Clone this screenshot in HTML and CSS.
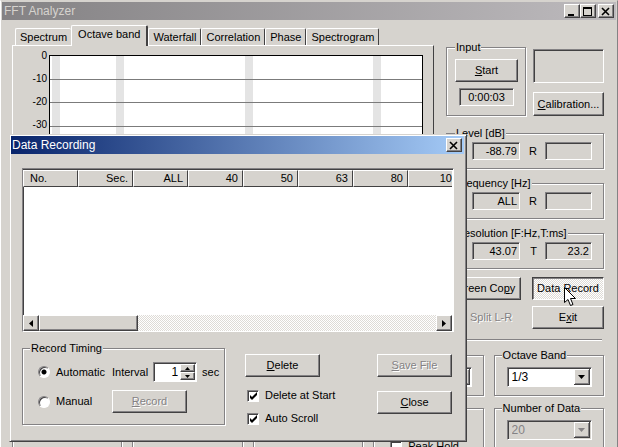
FILE: index.html
```html
<!DOCTYPE html>
<html lang="en">
<head>
    <meta charset="UTF-8">
    <meta name="viewport" content="width=device-width, initial-scale=1.0">
    <title>FFT Analyzer</title>
    <link rel="stylesheet" href="styles.css">
</head>
<body>
    <div class="window">
        <header class="titlebar">
            <h1>FFT Analyzer</h1>
            <div class="window-buttons">
                <button class="btn caption" aria-label="Minimize"><svg width="10" height="9"><path d="M1 7h6v2H1z"/></svg></button>
                <button class="btn caption" aria-label="Maximize"><svg width="10" height="9"><path fill-rule="evenodd" d="M0 0h9v9H0zM1 2v6h7V2z"/></svg></button>
                <button class="btn caption close" aria-label="Close window"><svg width="10" height="9"><path d="M1 1l7 7M8 1l-7 7" stroke="#000" stroke-width="1.6"/></svg></button>
            </div>
        </header>

        <main class="client">
            <div class="main">
                <section class="analyzer">
                    <div class="tabs" role="tablist">
                        <button class="tab" role="tab">Spectrum</button>
                        <button class="tab active" role="tab" aria-selected="true">Octave band</button>
                        <button class="tab" role="tab">Waterfall</button>
                        <button class="tab" role="tab">Correlation</button>
                        <button class="tab" role="tab">Phase</button>
                        <button class="tab" role="tab">Spectrogram</button>
                    </div>
                    <div class="panel">
                        <div class="axis">
                            <span>0</span>
                            <span>-10</span>
                            <span>-20</span>
                            <span>-30</span>
                        </div>
                        <svg class="plot">
                            <rect width="100%" height="100%" fill="#fff"/>
                            <g fill="#e4e4e4">
                                <rect x="2" width="8" height="100%"/>
                                <rect x="66" width="8" height="100%"/>
                                <rect x="195" width="8" height="100%"/>
                                <rect x="323" width="8" height="100%"/>
                            </g>
                            <g fill="#7b7b7b">
                                <rect y="23" width="100%" height="1"/>
                                <rect y="46" width="100%" height="1"/>
                                <rect y="70" width="100%" height="1"/>
                            </g>
                        </svg>
                    </div>
                </section>

                <aside class="side">
                    <div class="input-row">
                        <fieldset class="group input-group">
                            <legend>Input</legend>
                            <button class="btn"><u>S</u>tart</button>
                            <output class="field time">0:00:03</output>
                        </fieldset>
                        <div class="input-extra">
                            <div class="field display"></div>
                            <button class="btn"><u>C</u>alibration...</button>
                        </div>
                    </div>
                    <fieldset class="group readout">
                        <legend>Level [dB]</legend>
                        <output class="field">-88.79</output>
                        <span>R</span><output class="field"></output>
                    </fieldset>
                    <fieldset class="group readout">
                        <legend>Frequency [Hz]</legend>
                        <output class="field">ALL</output>
                        <span>R</span><output class="field"></output>
                    </fieldset>
                    <fieldset class="group readout">
                        <legend>Resolution [F:Hz,T:ms]</legend>
                        <output class="field">43.07</output>
                        <span>T</span><output class="field">23.2</output>
                    </fieldset>
                    <div class="actions">
                        <button class="btn">Screen Co<u>p</u>y</button>
                        <button class="btn pressed">Data Record
                            <svg class="cursor" width="12" height="20"><path d="M.5.5v15l3.5-3 2.5 6 2.500-1-2.500-6h5z" fill="#fff" stroke="#000"/></svg>
                        </button>
                        <label class="check disabled"><input type="checkbox" disabled>Split L-R</label>
                        <button class="btn">E<u>x</u>it</button>
                    </div>
                </aside>
            </div>

            <hr>

            <div class="options">
                <fieldset class="group plain"></fieldset>
                <fieldset class="group plain"></fieldset>
                <fieldset class="group plain"></fieldset>
                <div class="stack">
                    <fieldset class="group plain">
                        <select aria-label="Window"></select>
                    </fieldset>
                    <fieldset class="group plain">
                        <label class="check peak"><input type="checkbox">Peak Hold</label>
                    </fieldset>
                </div>
                <div class="stack">
                    <fieldset class="group">
                        <legend>Octave Band</legend>
                        <select aria-label="Octave Band"><option>1/3</option></select>
                    </fieldset>
                    <fieldset class="group">
                        <legend>Number of Data</legend>
                        <select aria-label="Number of Data" disabled><option>20</option></select>
                    </fieldset>
                </div>
            </div>
        </main>

        <div class="dialog" role="dialog" aria-labelledby="dialog-title">
            <header class="titlebar">
                <h2 id="dialog-title">Data Recording</h2>
                <div class="window-buttons">
                    <button class="btn caption close" aria-label="Close dialog"><svg width="10" height="9"><path d="M1 1l7 7M8 1l-7 7" stroke="#000" stroke-width="1.6"/></svg></button>
                </div>
            </header>
            <div class="dialog-body">
                <div class="list">
                    <div class="list-view">
                        <table>
                            <thead>
                                <tr>
                                    <th>No.</th>
                                    <th>Sec.</th>
                                    <th>ALL</th>
                                    <th>40</th>
                                    <th>50</th>
                                    <th>63</th>
                                    <th>80</th>
                                    <th>100</th>
                                </tr>
                            </thead>
                            <tbody></tbody>
                        </table>
                    </div>
                    <div class="scrollbar">
                        <button class="btn arrow" aria-label="Scroll left"><svg width="4" height="7"><path d="M4 0v7L0 3.500z"/></svg></button>
                        <div class="thumb"></div>
                        <button class="btn arrow right" aria-label="Scroll right"><svg width="4" height="7"><path d="M0 0v7l4-3.500z"/></svg></button>
                    </div>
                </div>

                <div class="controls">
                    <fieldset class="group timing">
                        <legend>Record Timing</legend>
                        <label class="check"><input type="radio" name="timing" checked>Automatic</label>
                        <div class="interval">
                            <label for="interval">Interval</label>
                            <span class="spin">
                                <input id="interval" type="text" value="1">
                                <span class="spin-buttons">
                                    <button class="btn" aria-label="Increase"><svg width="5" height="3"><path d="M0 3h5L2.500 0z"/></svg></button>
                                    <button class="btn" aria-label="Decrease"><svg width="5" height="3"><path d="M0 0h5L2.500 3z"/></svg></button>
                                </span>
                            </span>
                            <span>sec</span>
                        </div>
                        <label class="check"><input type="radio" name="timing">Manual</label>
                        <button class="btn" disabled><u>R</u>ecord</button>
                    </fieldset>
                    <div class="recording">
                        <button class="btn"><u>D</u>elete</button>
                        <label class="check"><input type="checkbox" checked>Delete at Start</label>
                        <label class="check"><input type="checkbox" checked>Auto Scroll</label>
                    </div>
                    <div class="finish">
                        <button class="btn" disabled><u>S</u>ave File</button>
                        <button class="btn"><u>C</u>lose</button>
                    </div>
                </div>
            </div>
        </div>
    </div>
</body>
</html>
```
FILE: styles.css
```css
:root {
    --face: #d6d3ce;
    --light: #ffffff;
    --shadow: #848284;
    --dark: #424142;
    --dither: repeating-conic-gradient(#ffffff 0% 25%, #dedbd6 0% 50%);
}

* {
    box-sizing: border-box;
    margin: 0;
    padding: 0;
}

body {
    font-family: "Liberation Sans", Arial, sans-serif;
    font-size: 11px;
    line-height: 13px;
    color: #000;
    background: var(--face);
    overflow: hidden;
}

button, input, select {
    font: inherit;
    color: inherit;
}

h1, h2 {
    font-size: 12px;
    font-weight: normal;
}

/* windows */

.window {
    position: relative;
    height: 100vh;
    overflow: hidden;
    padding: 1px;
    border: solid;
    border-width: 1px 1px 0;
    border-color: var(--face) var(--shadow) var(--face) var(--light);
}

.titlebar {
    display: flex;
    align-items: center;
    justify-content: space-between;
    height: 18px;
    padding: 0 2px;
    color: var(--face);
    background: linear-gradient(90deg, #848284, #bdbabd);
}

.window-buttons {
    display: flex;
}

.btn {
    display: flex;
    align-items: center;
    justify-content: center;
    height: 23px;
    white-space: nowrap;
    background: var(--face);
    border: 1px solid;
    border-color: var(--light) var(--dark) var(--dark) var(--light);
    box-shadow: inset -1px -1px 0 var(--shadow);
}

.btn:disabled {
    color: var(--shadow);
    text-shadow: 1px 1px 0 var(--light);
}

.caption {
    width: 16px;
    height: 14px;
}

.caption.close {
    margin-left: 2px;
}

.client {
    padding: 0 12px 0 10px;
}

.main {
    display: flex;
    gap: 12px;
}

/* tabs and graph */

.analyzer {
    flex: 1;
    min-width: 0;
    display: flex;
    flex-direction: column;
    padding-top: 5px;
}

.tabs {
    display: flex;
    align-items: flex-end;
    height: 20px;
    padding-left: 3px;
}

.tab {
    height: 17px;
    padding: 0 4px;
    background: var(--face);
    border: solid;
    border-width: 1px 1px 0;
    border-color: var(--light) var(--dark) var(--light) var(--light);
    border-radius: 2px 2px 0 0;
}

.tab:first-child {
    border-right-width: 0;
}

.tab.active {
    height: 21px;
    padding: 0 6px 4px;
    margin-bottom: -1px;
    border-right-width: 2px;
    z-index: 1;
}

.panel {
    flex: 1;
    display: flex;
    padding: 9px 10px 8px 0;
    border: 1px solid;
    border-color: var(--light) var(--dark) var(--dark) var(--light);
}

.axis {
    display: flex;
    flex-direction: column;
    gap: 10px;
    width: 36px;
    padding-right: 2px;
    margin-top: -6px;
    font-size: 10px;
    text-align: right;
}

.plot {
    flex: 1;
    min-width: 0;
    height: 100%;
    border: 1px solid #000;
}

/* right column */

.side {
    width: 158px;
    padding-top: 21px;
}

.group {
    min-width: 0;
    border: 1px solid var(--shadow);
    box-shadow: 1px 1px 0 var(--light), inset 1px 1px 0 var(--light);
}

.group legend {
    padding: 0 1px;
    line-height: 13px;
    white-space: nowrap;
    background: var(--face);
}

.field {
    display: block;
    height: 18px;
    padding: 1px 2px;
    line-height: 14px;
    text-align: right;
    border: 1px solid;
    border-color: var(--shadow) var(--light) var(--light) var(--shadow);
    box-shadow: inset 1px 1px 0 var(--dark);
}

.input-row {
    display: flex;
    gap: 7px;
    margin-bottom: 11px;
}

.input-group {
    width: 80px;
    padding: 5px 7px 9px 8px;
}

.input-group .btn {
    width: 100%;
}

.field.time {
    margin: 6px 4px 0;
    text-align: center;
}

.input-extra {
    flex: 1;
    padding-top: 8px;
}

.field.display {
    height: 34px;
    margin-bottom: 9px;
}

.input-extra .btn {
    width: 100%;
    height: 24px;
}

.readout {
    display: grid;
    grid-template-columns: 48px 9px 47px;
    justify-content: space-between;
    align-items: center;
    padding: 2px 11px 8px 25px;
    margin-bottom: 8px;
}

.readout legend {
    margin-left: -17px;
}

.readout span {
    text-align: right;
}

.actions {
    display: grid;
    grid-template-columns: 1fr 72px;
    gap: 6px 11px;
}

.btn.pressed {
    position: relative;
    background: var(--dither) 0 0 / 2px 2px;
    border-color: var(--dark) var(--light) var(--light) var(--dark);
    box-shadow: inset 1px 1px 0 var(--shadow);
}

.cursor {
    position: absolute;
    left: 31px;
    top: 9px;
    z-index: 1;
}

/* check boxes, radios and lists */

.check {
    display: flex;
    align-items: center;
    gap: 6px;
    white-space: nowrap;
}

.check input {
    appearance: none;
    flex: none;
    width: 12px;
    height: 12px;
    background: #fff center no-repeat;
    border: 1px solid;
    border-color: var(--shadow) var(--light) var(--light) var(--shadow);
    box-shadow: inset 1px 1px 0 var(--dark);
}

.check input[type="radio"] {
    border-radius: 50%;
}

.check input[type="checkbox"]:checked {
    background-image: url("data:image/svg+xml,%3Csvg xmlns='http://www.w3.org/2000/svg' width='8' height='8'%3E%3Cpath d='M1 3v3l2 2 5-5V0L3 5z'/%3E%3C/svg%3E");
}

.check input[type="radio"]:checked {
    background-image: radial-gradient(circle, #000 2px, transparent 3px);
}

.check.disabled {
    padding-left: 6px;
    color: var(--shadow);
    text-shadow: 1px 1px 0 var(--light);
}

select {
    appearance: none;
    display: block;
    width: 100%;
    height: 20px;
    padding: 0 4px;
    font-size: 12px;
    border: 1px solid;
    border-color: var(--shadow) var(--light) var(--light) var(--shadow);
    box-shadow: inset 1px 1px 0 var(--dark);
    background: #fff right 1px center no-repeat url("data:image/svg+xml,%3Csvg xmlns='http://www.w3.org/2000/svg' width='16' height='16'%3E%3Cpath fill='%23424142' d='M0 0h16v16H0z'/%3E%3Cpath fill='%23fff' d='M0 0h15v15H0z'/%3E%3Cpath fill='%23848284' d='M1 1h14v14H1z'/%3E%3Cpath fill='%23d6d3ce' d='M1 1h13v13H1z'/%3E%3Cpath d='M4 6h7L7.500 10z'/%3E%3C/svg%3E");
}

select:disabled {
    color: var(--shadow);
    opacity: 1;
    background-color: var(--face);
    background-image: url("data:image/svg+xml,%3Csvg xmlns='http://www.w3.org/2000/svg' width='16' height='16'%3E%3Cpath fill='%23424142' d='M0 0h16v16H0z'/%3E%3Cpath fill='%23fff' d='M0 0h15v15H0z'/%3E%3Cpath fill='%23848284' d='M1 1h14v14H1z'/%3E%3Cpath fill='%23d6d3ce' d='M1 1h13v13H1z'/%3E%3Cpath fill='%23848284' d='M4 6h7L7.500 10z'/%3E%3C/svg%3E");
}

hr {
    margin: 10px 2px 8px;
    border: solid;
    border-width: 1px 0;
    border-color: var(--shadow) transparent var(--light);
}

.options {
    display: grid;
    grid-template-columns: repeat(5, 1fr);
    gap: 10px;
}

.group.plain {
    margin-top: 6px;
}

.stack {
    display: flex;
    flex-direction: column;
    gap: 6px;
}

.stack .group {
    padding: 5px 11px 8px 12px;
}

.stack .group.plain {
    padding-top: 11px;
}

.stack .group legend {
    margin-left: -5px;
}

.stack .check.peak {
    margin: 20px 0 0 4px;
}

/* data recording dialog */

.dialog {
    position: absolute;
    left: 8px;
    right: 150px;
    top: 133px;
    padding: 1px;
    background: var(--face);
    border: 1px solid;
    border-color: var(--face) var(--dark) var(--dark) var(--face);
    box-shadow: inset 1px 1px 0 var(--light), inset -1px -1px 0 var(--shadow);
}

.dialog .titlebar {
    padding-left: 1px;
    margin: 0 1px 1px 0;
    color: #fff;
    background: linear-gradient(90deg, #08246b, #a5cbf7);
}

.dialog-body {
    padding: 13px 11px 15px;
}

.list {
    border: 1px solid;
    border-color: var(--shadow) var(--light) var(--light) var(--shadow);
    box-shadow: inset 1px 1px 0 var(--dark);
    padding: 1px 1px 0 0;
    background: #fff;
}

.list-view {
    height: 145px;
    overflow: hidden;
}

.list table {
    width: 440px;
    table-layout: fixed;
    border-collapse: separate;
    border-spacing: 0;
}

.list th {
    height: 17px;
    padding: 0 4px 0 6px;
    font-weight: normal;
    text-align: right;
    background: var(--face);
    border: 1px solid;
    border-color: var(--light) var(--dark) var(--dark) var(--light);
}

.list th:first-child {
    text-align: left;
}

.scrollbar {
    display: flex;
    height: 16px;
    background: var(--dither) 0 0 / 2px 2px;
}

.arrow {
    width: 16px;
    height: 16px;
}

.arrow.right {
    margin-left: auto;
}

.thumb {
    width: 99px;
    background: var(--face);
    border: 1px solid;
    border-color: var(--light) var(--dark) var(--dark) var(--light);
    box-shadow: inset -1px -1px 0 var(--shadow);
}

.controls {
    display: flex;
    align-items: flex-start;
    margin-top: 10px;
}

.timing {
    display: grid;
    grid-template-columns: 74px 1fr;
    grid-template-rows: 20px 23px;
    gap: 8px 0;
    align-items: center;
    width: 203px;
    padding: 7px 7px 11px 15px;
}

.timing legend {
    margin-left: -8px;
}

.timing .btn {
    width: 75px;
}

.interval {
    display: flex;
    align-items: center;
    gap: 5px;
}

.spin {
    display: flex;
    width: 44px;
    height: 20px;
    padding: 1px;
    background: #fff;
    border: 1px solid;
    border-color: var(--shadow) var(--light) var(--light) var(--shadow);
    box-shadow: inset 1px 1px 0 var(--dark);
}

.spin input {
    flex: 1;
    min-width: 0;
    padding-right: 2px;
    font-size: 12px;
    text-align: right;
    background: none;
    border: 0;
}

.spin-buttons {
    width: 15px;
}

.timing .spin .btn {
    width: 15px;
    height: 8px;
}

.recording {
    display: flex;
    flex-direction: column;
    gap: 10px;
    margin: 12px 0 0 20px;
}

.recording .btn,
.finish .btn {
    width: 75px;
}

.recording .btn {
    margin-bottom: 2px;
}

.recording .check {
    padding-left: 2px;
}

.finish {
    display: flex;
    flex-direction: column;
    gap: 14px;
    margin: 12px 2px 0 auto;
}
```
